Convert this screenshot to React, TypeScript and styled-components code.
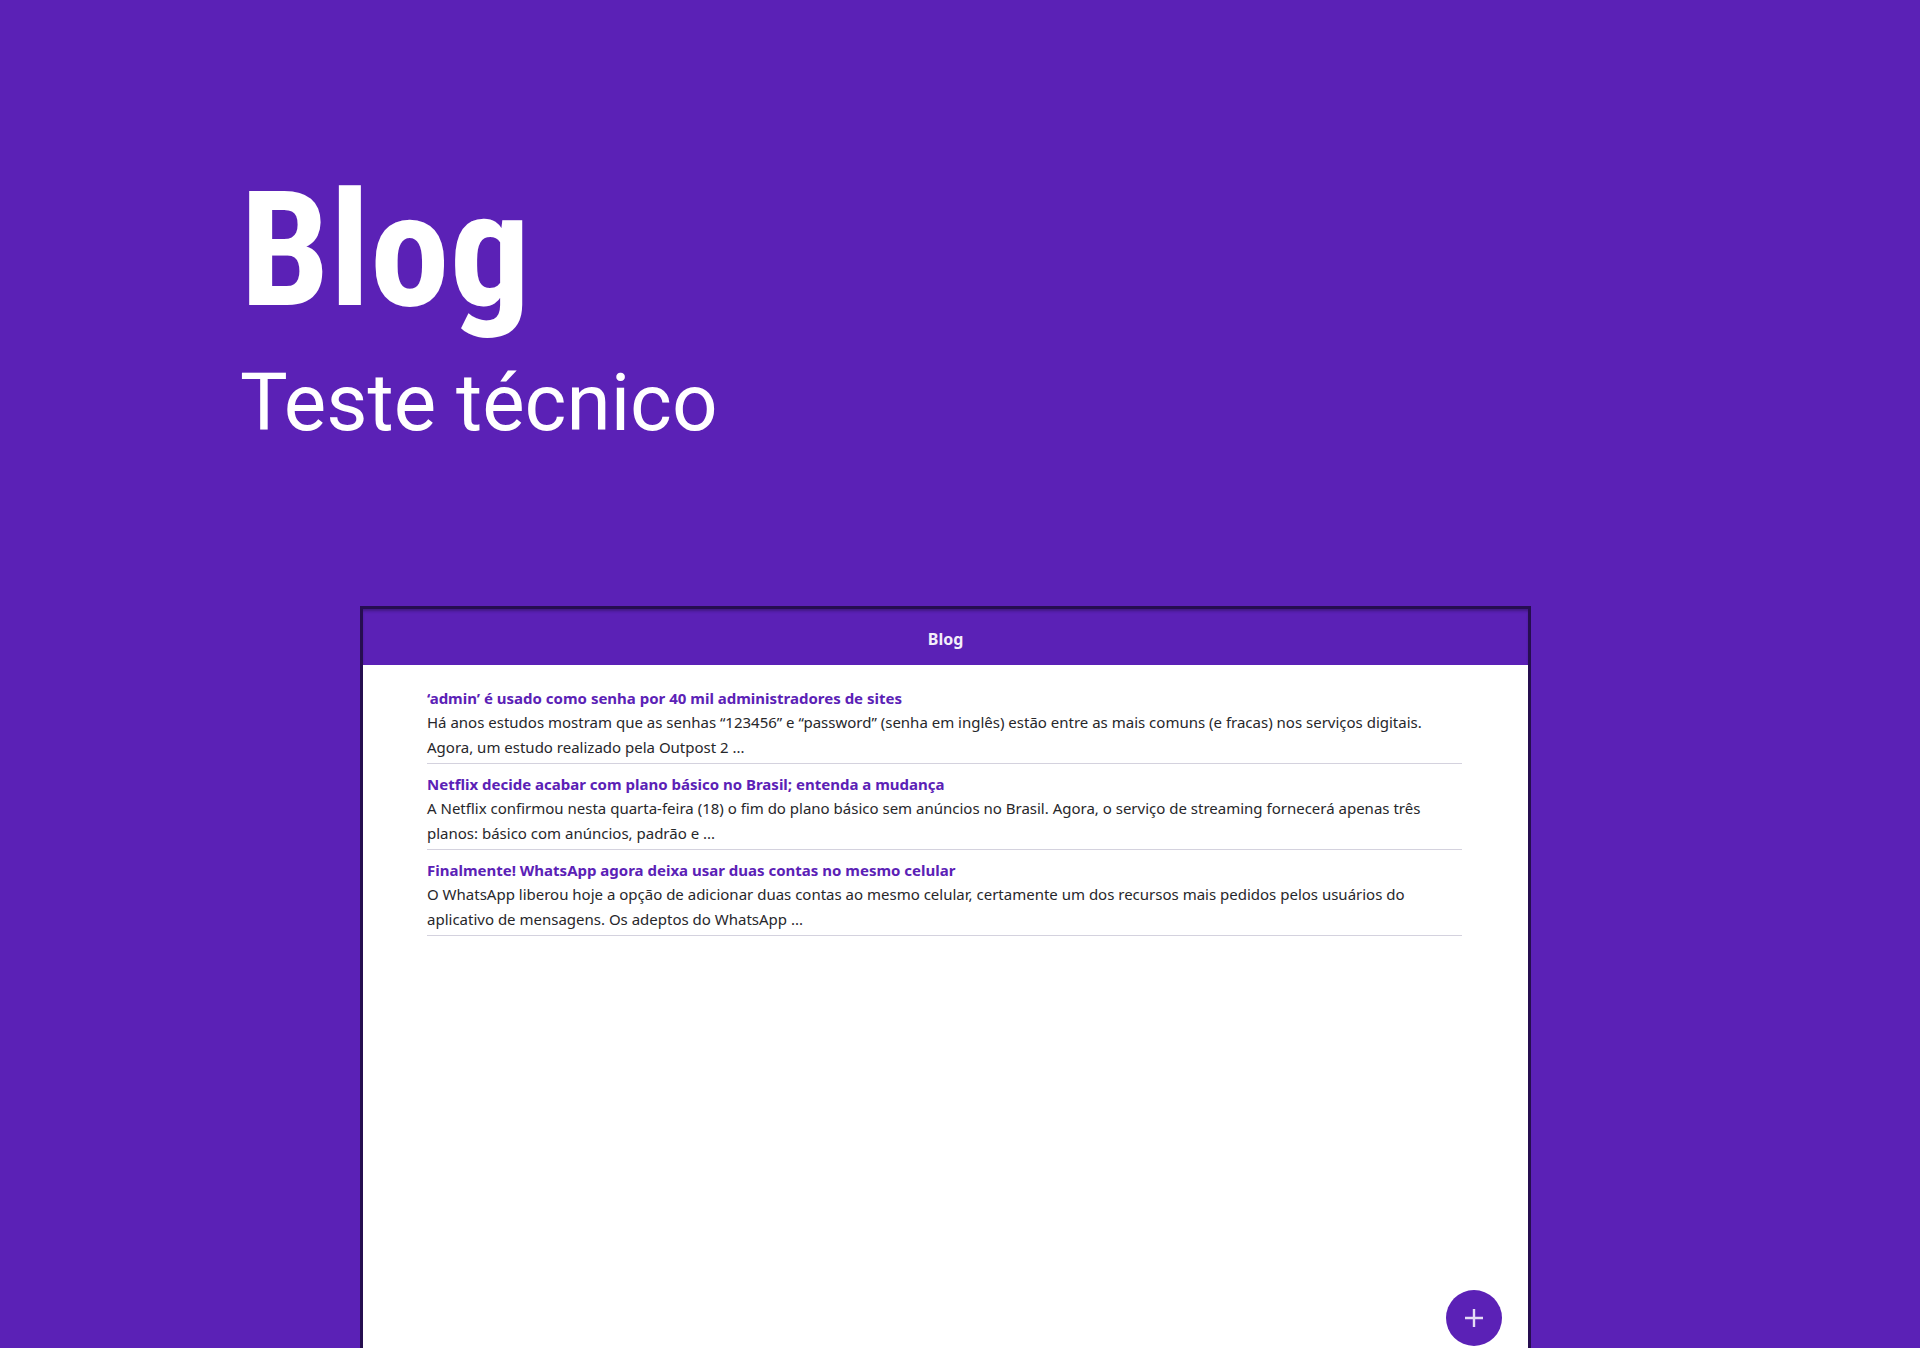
import React from "react";
import styled, { createGlobalStyle } from "styled-components";

const purple = "#5b21b6";
const frame = "#260e50";

const GlobalStyle = createGlobalStyle`
  *, *::before, *::after { box-sizing: border-box; }
  body { margin: 0; background: ${purple}; }
  h1, h2, p, ul { margin: 0; padding: 0; }
`;

const Page = styled.div`
  display: flex;
  flex-direction: column;
  min-height: 100vh;
  padding-top: 157px;
  background: ${purple};
  color: #fff;
`;

const Hero = styled.header`
  display: flex;
  flex-direction: column;
  gap: 11px;
  padding: 0 12.5%;
  margin-bottom: 156px;
`;

const HeroTitle = styled.h1`
  font: 700 160px/188px "Roboto Condensed", Roboto, sans-serif;
`;

const HeroSubtitle = styled.p`
  font: 400 80px/94px Roboto, sans-serif;
`;

const AppWindow = styled.section`
  position: relative;
  display: flex;
  flex: 1;
  flex-direction: column;
  width: 61%;
  margin-left: 18.75%;
  border: 3px solid ${frame};
  border-bottom: 0;
  background: #fff;
  font-family: "Noto Sans", sans-serif;
`;

const TopBar = styled.header`
  display: flex;
  align-items: center;
  justify-content: center;
  height: 56px;
  padding-top: 4px;
  background: ${purple};
  box-shadow: inset 0 3px 3px -1px rgba(38, 14, 80, 0.5);
`;

const BarTitle = styled.h2`
  color: #f3effa;
  font-size: 16px;
  font-weight: 700;
  line-height: 24px;
`;

const PostList = styled.ul`
  padding: 13px 66px 64px 64px;
  list-style: none;
`;

const Post = styled.li`
  padding: 8px 0 3px;
  border-bottom: 1px solid #d4d2de;
  font-size: 15px;
`;

const PostTitle = styled.a`
  display: block;
  color: ${purple};
  font-weight: 700;
  line-height: 24px;
  text-decoration: none;
`;

const Excerpt = styled.p`
  color: #27272b;
  line-height: 25px;
`;

const AddButton = styled.button`
  position: absolute;
  right: 26px;
  bottom: 2px;
  display: grid;
  place-items: center;
  width: 56px;
  height: 56px;
  padding: 0;
  border: 0;
  border-radius: 50%;
  background: ${purple};
  color: #e6dcf5;
  cursor: pointer;
`;

const posts = [
  {
    title: "‘admin’ é usado como senha por 40 mil administradores de sites",
    text: "Há anos estudos mostram que as senhas “123456” e “password” (senha em inglês) estão entre as mais comuns (e fracas) nos serviços digitais. Agora, um estudo realizado pela Outpost 2 ...",
  },
  {
    title: "Netflix decide acabar com plano básico no Brasil; entenda a mudança",
    text: "A Netflix confirmou nesta quarta-feira (18) o fim do plano básico sem anúncios no Brasil. Agora, o serviço de streaming fornecerá apenas três planos: básico com anúncios, padrão e ...",
  },
  {
    title: "Finalmente! WhatsApp agora deixa usar duas contas no mesmo celular",
    text: "O WhatsApp liberou hoje a opção de adicionar duas contas ao mesmo celular, certamente um dos recursos mais pedidos pelos usuários do aplicativo de mensagens. Os adeptos do WhatsApp ...",
  },
];

export default function App() {
  return (
    <Page>
      <GlobalStyle />
      <Hero>
        <HeroTitle>Blog</HeroTitle>
        <HeroSubtitle>Teste técnico</HeroSubtitle>
      </Hero>
      <AppWindow>
        <TopBar>
          <BarTitle>Blog</BarTitle>
        </TopBar>
        <PostList>
          {posts.map((post) => (
            <Post key={post.title}>
              <PostTitle href="#">{post.title}</PostTitle>
              <Excerpt>{post.text}</Excerpt>
            </Post>
          ))}
        </PostList>
        <AddButton type="button" aria-label="Adicionar post">
          <svg width="20" height="20" viewBox="0 0 20 20" fill="none" stroke="currentColor" strokeWidth="2.4">
            <path d="M10 1v18M1 10h18" />
          </svg>
        </AddButton>
      </AppWindow>
    </Page>
  );
}
